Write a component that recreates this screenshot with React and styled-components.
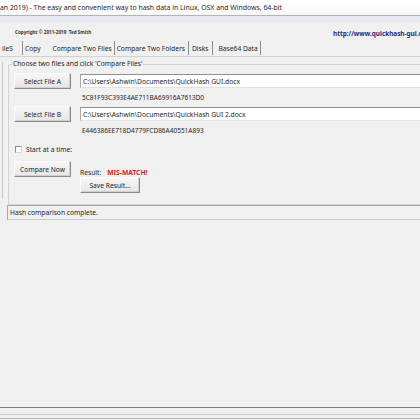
import React from 'react';
import styled, { createGlobalStyle } from 'styled-components';

const Global = createGlobalStyle`
  html, body { margin: 0; padding: 0; width: 420px; height: 420px; overflow: hidden; background: #f0f0f0; }
  body { font-family: "Noto Sans", "Open Sans", sans-serif; font-size: 6.7px; color: #1e1e1e; }
  * { box-sizing: border-box; }
`;

const Window = styled.div`
  width: 420px;
  height: 420px;
  display: flex;
  flex-direction: column;
  background: #f0f0f0;
  overflow: hidden;
`;

const TitleBar = styled.div`
  height: 16px;
  flex: none;
  background: linear-gradient(#ffffff, #f7f7f7);
  border-bottom: 1px solid #b4b4b4;
  display: flex;
  align-items: center;
  white-space: nowrap;
  font-size: 6.9px;
  color: #2a2a2a;
`;

const Band = styled.div`
  height: 6px;
  flex: none;
  background: #e6e9f1;
`;

const HeaderRow = styled.div`
  height: 17px;
  flex: none;
  display: flex;
  align-items: flex-end;
  padding: 0 0 1px 15px;
  white-space: nowrap;
`;

const Copyright = styled.span`
  font-size: 4.6px;
  font-weight: 700;
  color: #333;
  margin-bottom: 3px;
`;

const Url = styled.span`
  flex: none;
  margin-left: auto;
  width: 87px;
  overflow: hidden;
  font-size: 6.4px;
  font-weight: 700;
  color: #1f2a7a;
`;

const Tabs = styled.div`
  height: 14px;
  flex: none;
  display: flex;
  align-items: center;
  white-space: nowrap;
  margin-top: 2px;
`;

const Tab = styled.div`
  height: 14px;
  display: flex;
  align-items: center;
  padding: 0 ${p => p.$pr}px 0 ${p => p.$pl}px;
  border-right: 1px solid ${p => (p.$sep ? '#8c8c8c' : 'transparent')};
  color: #1e1e1e;
`;

const Page = styled.div`
  flex: 1;
  display: flex;
  flex-direction: column;
  border-top: 1px solid #d2d2d2;
  margin-top: 1px;
  padding: 3px 0 0 8px;
  position: relative;
`;

const LeftEdge = styled.div`
  position: absolute;
  left: 2px;
  top: 5px;
  bottom: 208px;
  width: 1px;
  background: #c8c8c8;
`;

const Group = styled.fieldset`
  margin: 0;
  padding: 4px 0 0 5px;
  border: 1px solid #d2d2d2;
  border-right: none;
  border-radius: 2px 0 0 2px;
  height: 145px;
`;

const Legend = styled.legend`
  padding: 0 1px;
  margin-left: -2px;
  line-height: 8px;
  color: #1e1e1e;
`;

const Row = styled.div`
  display: flex;
  align-items: ${p => p.$align || 'center'};
  gap: 9px;
  margin-top: ${p => p.$mt ?? 0}px;
`;

const Button = styled.div`
  width: ${p => p.$w}px;
  height: 16px;
  flex: none;
  display: flex;
  align-items: center;
  justify-content: center;
  color: #1e1e1e;
  background: linear-gradient(#f6f6f6, #e6e6e6);
  border-top: 1px solid #fcfcfc;
  border-left: 1px solid #fcfcfc;
  border-right: 1px solid #8a8a8a;
  border-bottom: 1px solid #8a8a8a;
  box-shadow: inset -1px -1px 0 #cfcfcf;
`;

const Input = styled.div`
  flex: 1;
  height: 14px;
  background: #ffffff;
  border-top: 1px solid #8e8e8e;
  border-left: 1px solid #a8a8a8;
  border-bottom: 1px solid #e2e2e2;
  display: flex;
  align-items: center;
  padding-left: 2px;
  white-space: nowrap;
  color: #1e1e1e;
`;

const Hash = styled.div`
  margin: 5px 0 0 68px;
  line-height: 8px;
  font-size: 6.5px;
  color: #1e1e1e;
`;

const CheckRow = styled.label`
  display: flex;
  align-items: center;
  gap: 4px;
  height: 8px;
  margin-top: 10px;
  margin-left: 1px;
`;

const Check = styled.span`
  width: 7px;
  height: 7px;
  border: 1px solid #8a8a8a;
  border-right-color: #d8d8d8;
  border-bottom-color: #d8d8d8;
  background: #fff;
`;

const ResultCol = styled.div`
  display: flex;
  flex-direction: column;
  gap: 1px;
  padding-top: 7px;
`;

const ResultLine = styled.div`
  display: flex;
  align-items: center;
  gap: 6px;
  height: 8px;
`;

const Mismatch = styled.span`
  color: #d42020;
  font-weight: 700;
`;

const Status = styled.div`
  margin: 0 0 0 -1px;
  height: 15px;
  border-top: 1px solid #a8a8a8;
  border-left: 1px solid #a8a8a8;
  border-bottom: 1px solid #c8c8c8;
  display: flex;
  align-items: center;
  padding-left: 2px;
  color: #1e1e1e;
`;

const Spacer = styled.div`
  flex: 1;
`;

const Footer = styled.div`
  flex: none;
  height: 13px;
  border-top: 1px solid #7c7c7c;
  display: flex;
  flex-direction: column;
  justify-content: flex-end;
  gap: 3px;
  padding-bottom: 1px;
`;

const FootLine = styled.div`
  height: 1px;
  background: ${p => p.$c};
`;

export default function App() {
  return (
    <Window>
      <Global />
      <TitleBar>an 2019) - The easy and convenient way to hash data in Linux, OSX and Windows, 64-bit</TitleBar>
      <Band />
      <HeaderRow>
        <Copyright>Copyright © 2011-2019&nbsp;&nbsp;Ted Smith</Copyright>
        <Url>http://www.quickhash-gui.org</Url>
      </HeaderRow>
      <Tabs>
        <Tab $pl={2} $pr={9} $sep>ileS</Tab>
        <Tab $pl={2} $pr={10}>Copy</Tab>
        <Tab $sep $pl={1} $pr={2}>Compare Two Files</Tab>
        <Tab $sep $pl={2} $pr={3}>Compare Two Folders</Tab>
        <Tab $sep $pl={3} $pr={4}>Disks</Tab>
        <Tab $sep $pl={5} $pr={2}>Base64 Data</Tab>
      </Tabs>
      <Page>
        <LeftEdge />
        <Group>
          <Legend>Choose two files and click 'Compare Files'</Legend>
          <Row $mt={1}>
            <Button $w={57}>Select File A</Button>
            <Input>C:\Users\Ashwin\Documents\QuickHash GUI.docx</Input>
          </Row>
          <Hash>5C81F93C393E4AE711BA69916A7613D0</Hash>
          <Row $mt={4}>
            <Button $w={57}>Select File B</Button>
            <Input>C:\Users\Ashwin\Documents\QuickHash GUI 2.docx</Input>
          </Row>
          <Hash>E446386EE718D4779FCD86A40551A893</Hash>
          <CheckRow>
            <Check />
            Start at a time:
          </CheckRow>
          <Row $mt={8} $align="flex-start">
            <Button $w={57}>Compare Now</Button>
            <ResultCol>
              <ResultLine>
                <span>Result:</span>
                <Mismatch>MIS-MATCH!</Mismatch>
              </ResultLine>
              <Button $w={60}>Save Result...</Button>
            </ResultCol>
          </Row>
        </Group>
        <Status>Hash comparison complete.</Status>
        <Spacer />
      </Page>
      <Footer>
        <FootLine $c="#d0d0d0" />
        <FootLine $c="#b4b4b4" />
      </Footer>
    </Window>
  );
}
